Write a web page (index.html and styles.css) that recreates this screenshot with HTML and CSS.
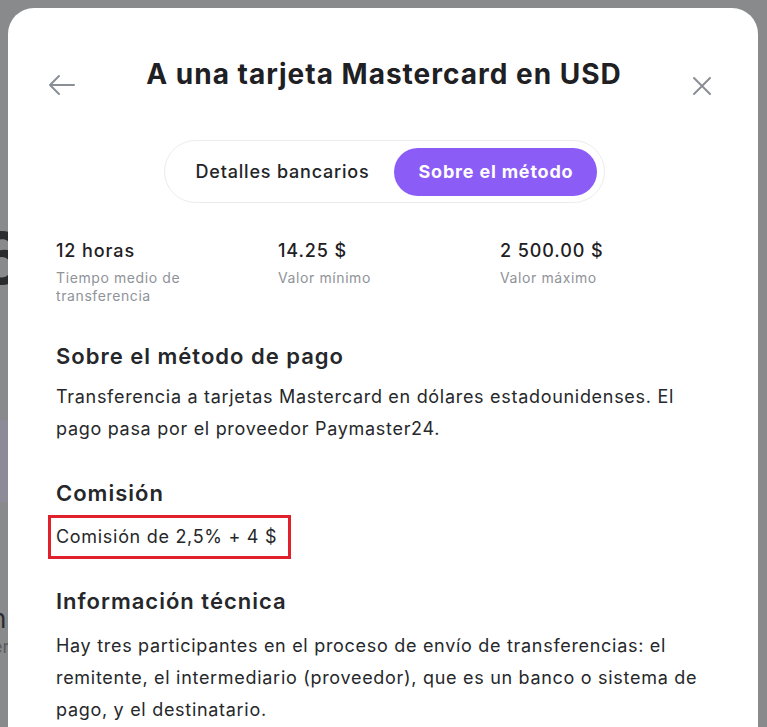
FILE: index.html
```html
<!DOCTYPE html>
<html lang="es">
<head>
<meta charset="utf-8">
<title>A una tarjeta Mastercard en USD</title>
<link rel="stylesheet" href="styles.css">
</head>
<body>
<div class="backdrop" aria-hidden="true">
  <span class="bg-six">6</span>
  <div class="bg-strip"></div>
  <span class="bg-n">n</span>
  <span class="bg-er">er</span>
</div>
<div class="modal">
  <header class="modal-head">
    <button class="icon-btn" aria-label="Atrás">
      <svg width="28" height="22" viewBox="0 0 28 22" fill="none" stroke="#8a8f96" stroke-width="2" stroke-linecap="round" stroke-linejoin="round"><path d="M26 11H2M11 2L2 11l9 9"/></svg>
    </button>
    <h1 class="title">A una tarjeta Mastercard en USD</h1>
    <button class="icon-btn" aria-label="Cerrar">
      <svg width="20" height="20" viewBox="0 0 20 20" fill="none" stroke="#8a8f96" stroke-width="2" stroke-linecap="round"><path d="M2 2l16 16M18 2L2 18"/></svg>
    </button>
  </header>
  <div class="tabs-wrap">
    <div class="tabs">
      <span class="tab">Detalles bancarios</span>
      <span class="tab active">Sobre el método</span>
    </div>
  </div>
  <div class="stats">
    <div class="stat"><div class="stat-val">12 horas</div><div class="stat-lbl">Tiempo medio de<br>transferencia</div></div>
    <div class="stat"><div class="stat-val">14.25 $</div><div class="stat-lbl">Valor mínimo</div></div>
    <div class="stat"><div class="stat-val">2 500.00 $</div><div class="stat-lbl">Valor máximo</div></div>
  </div>
  <section class="sec">
    <h2>Sobre el método de pago</h2>
    <p>Transferencia a tarjetas Mastercard en dólares estadounidenses. El pago pasa por el proveedor Paymaster24.</p>
  </section>
  <section class="sec">
    <h2>Comisión</h2>
    <p class="boxed">Comisión de 2,5% + 4 $</p>
  </section>
  <section class="sec">
    <h2>Información técnica</h2>
    <p>Hay tres participantes en el proceso de envío de transferencias: el remitente, el intermediario (proveedor), que es un banco o sistema de pago, y el destinatario.</p>
  </section>
</div>
</body>
</html>
```
FILE: styles.css
```css
* { box-sizing: border-box; }
html, body { margin: 0; padding: 0; }
body {
  background: #898a8c;
  font-family: Inter, "Noto Sans", sans-serif;
  color: #222427;
  height: 727px;
  overflow: hidden;
  position: relative;
}
.backdrop { position: absolute; inset: 0; }
.bg-six { position: absolute; left: -22px; top: 222px; font-size: 72px; font-weight: 600; color: #2a2c30; line-height: 1; }
.bg-strip { position: absolute; left: 0; top: 420px; width: 10px; height: 82px; background: #8c8b97; }
.bg-n { position: absolute; left: -9px; top: 603px; font-size: 26px; color: #2a2c30; }
.bg-er { position: absolute; left: -8px; top: 636px; font-size: 18px; color: #5a5c60; }
.modal {
  position: relative;
  margin: 8px 0 0 8px;
  width: 750px;
  min-height: 760px;
  background: #fff;
  border-radius: 26px;
  padding: 40px 48px 0 48px;
}
.modal-head {
  display: flex;
  align-items: center;
  justify-content: space-between;
  height: 52px;
}
.icon-btn {
  border: 0; background: none; padding: 0; cursor: pointer; display: flex;
}
.icon-btn:first-child { margin-left: -8px; margin-top: 22px; }
.icon-btn:last-child { margin-right: -2px; margin-top: 24px; }
.title {
  margin: 0;
  font-size: 28px;
  font-weight: 700;
  letter-spacing: 1px;
  color: #1e2023;
}
.tabs-wrap { display: flex; justify-content: center; margin-top: 40px; }
.tabs {
  display: flex; align-items: center;
  border: 1px solid #ececee;
  border-radius: 32px;
  padding: 7px 7px 7px 31px;
  gap: 24px;
  margin-left: 3px;
  height: 63px;
}
.tab { font-size: 18px; font-weight: 500; color: #222427; letter-spacing: 0.8px; }
.tab.active {
  background: #8b5cf6;
  color: #fff;
  font-weight: 700;
  border-radius: 24px;
  padding: 0 24px 0 25px;
  height: 48px;
  display: flex;
  align-items: center;
  font-size: 18px;
}
.stats { display: grid; grid-template-columns: 222px 222px 1fr; margin-top: 36px; }
.stat-val { font-size: 18px; font-weight: 500; color: #1e2023; line-height: 24px; letter-spacing: 0.9px; }
.stat-lbl { font-size: 14px; color: #8f9399; line-height: 18px; margin-top: 6px; letter-spacing: 0.6px; }
.sec h2 { margin: 0; font-size: 22px; font-weight: 600; color: #25272a; line-height: 30px; letter-spacing: 1px; }
.sec p { margin: 0; font-size: 18px; line-height: 32px; color: #26282b; max-width: 654px; letter-spacing: 0.7px; }
.sec:nth-of-type(1) { margin-top: 36px; }
.sec:nth-of-type(1) h2 { margin-bottom: 10px; }
.sec:nth-of-type(2) { margin-top: 33px; }
.sec:nth-of-type(2) h2 { margin-bottom: 7px; }
.sec:nth-of-type(3) { margin-top: 27px; }
.sec:nth-of-type(3) h2 { margin-bottom: 14px; }
.boxed {
  display: inline-block;
  border: 3px solid #e0202b;
  margin-left: -8px !important;
  padding: 2px 11px 3px 5px;
  line-height: 33px !important;
}
```
